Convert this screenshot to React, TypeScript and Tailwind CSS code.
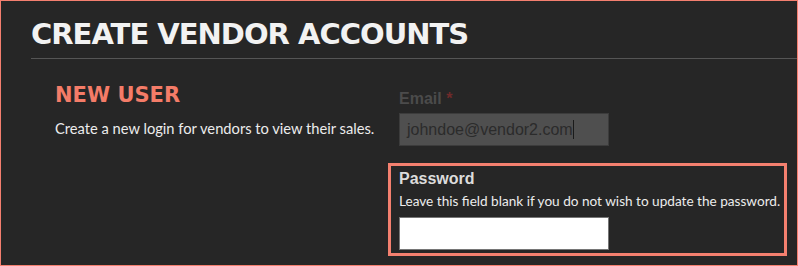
import React from "react";

export default function App() {
  return (
    <div className="w-[798px] h-[266px] border border-[#f47f6f] bg-[#262626] overflow-hidden box-border">
      <div className="ml-[30px] border-b border-[#555555] pt-[16px] pb-[7px]">
        <h1 className="m-0 text-[29px] leading-[34px] font-bold text-[#f2f2f2] tracking-[-1px]" style={{ fontFamily: '"DejaVu Sans", sans-serif' }}>
          CREATE VENDOR ACCOUNTS
        </h1>
      </div>
      <div className="flex">
        <div className="w-[333px] ml-[54px] pt-[22px]">
          <h2 className="m-0 text-[21px] leading-[28px] font-bold text-[#f47c68]" style={{ fontFamily: '"DejaVu Sans", sans-serif' }}>
            NEW USER
          </h2>
          <p className="m-0 mt-[9px] text-[14.7px] leading-[20px] text-[#ececec] whitespace-nowrap" style={{ fontFamily: 'Lato, sans-serif' }}>
            Create a new login for vendors to view their sales.
          </p>
        </div>
        <div className="flex flex-col w-[399px]">
          <div className="pl-[11px] pt-[30px]">
            <div className="text-[16px] leading-[20px] font-bold text-[#4b4b4b]" style={{ fontFamily: '"Liberation Sans", Arial, sans-serif' }}>
              Email <span className="text-[#6e2a2a]">*</span>
            </div>
            <div className="mt-[4px] w-[210px] h-[33px] bg-[#4f4f4f] border border-[#3c3c3c] flex items-center pl-[7px] text-[16px] text-[#2b2b2b]" style={{ fontFamily: '"Liberation Sans", Arial, sans-serif' }}>
              johndoe@vendor2.com<span className="inline-block w-[1px] h-[19px] bg-[#1a1a1a]"></span>
            </div>
          </div>
          <div className="mt-[17px] h-[93px] border-[3px] border-[#f4806f] pl-[8px] pt-[3px]">
            <div className="text-[16px] leading-[20px] font-bold text-[#dcdcdc]" style={{ fontFamily: '"Liberation Sans", Arial, sans-serif' }}>
              Password
            </div>
            <div className="mt-[2px] text-[13.6px] leading-[20px] text-[#ececec] whitespace-nowrap" style={{ fontFamily: 'Lato, sans-serif' }}>
              Leave this field blank if you do not wish to update the password.
            </div>
            <div className="mt-[6px] w-[210px] h-[33px] bg-white border border-[#767676]"></div>
          </div>
        </div>
      </div>
    </div>
  );
}
